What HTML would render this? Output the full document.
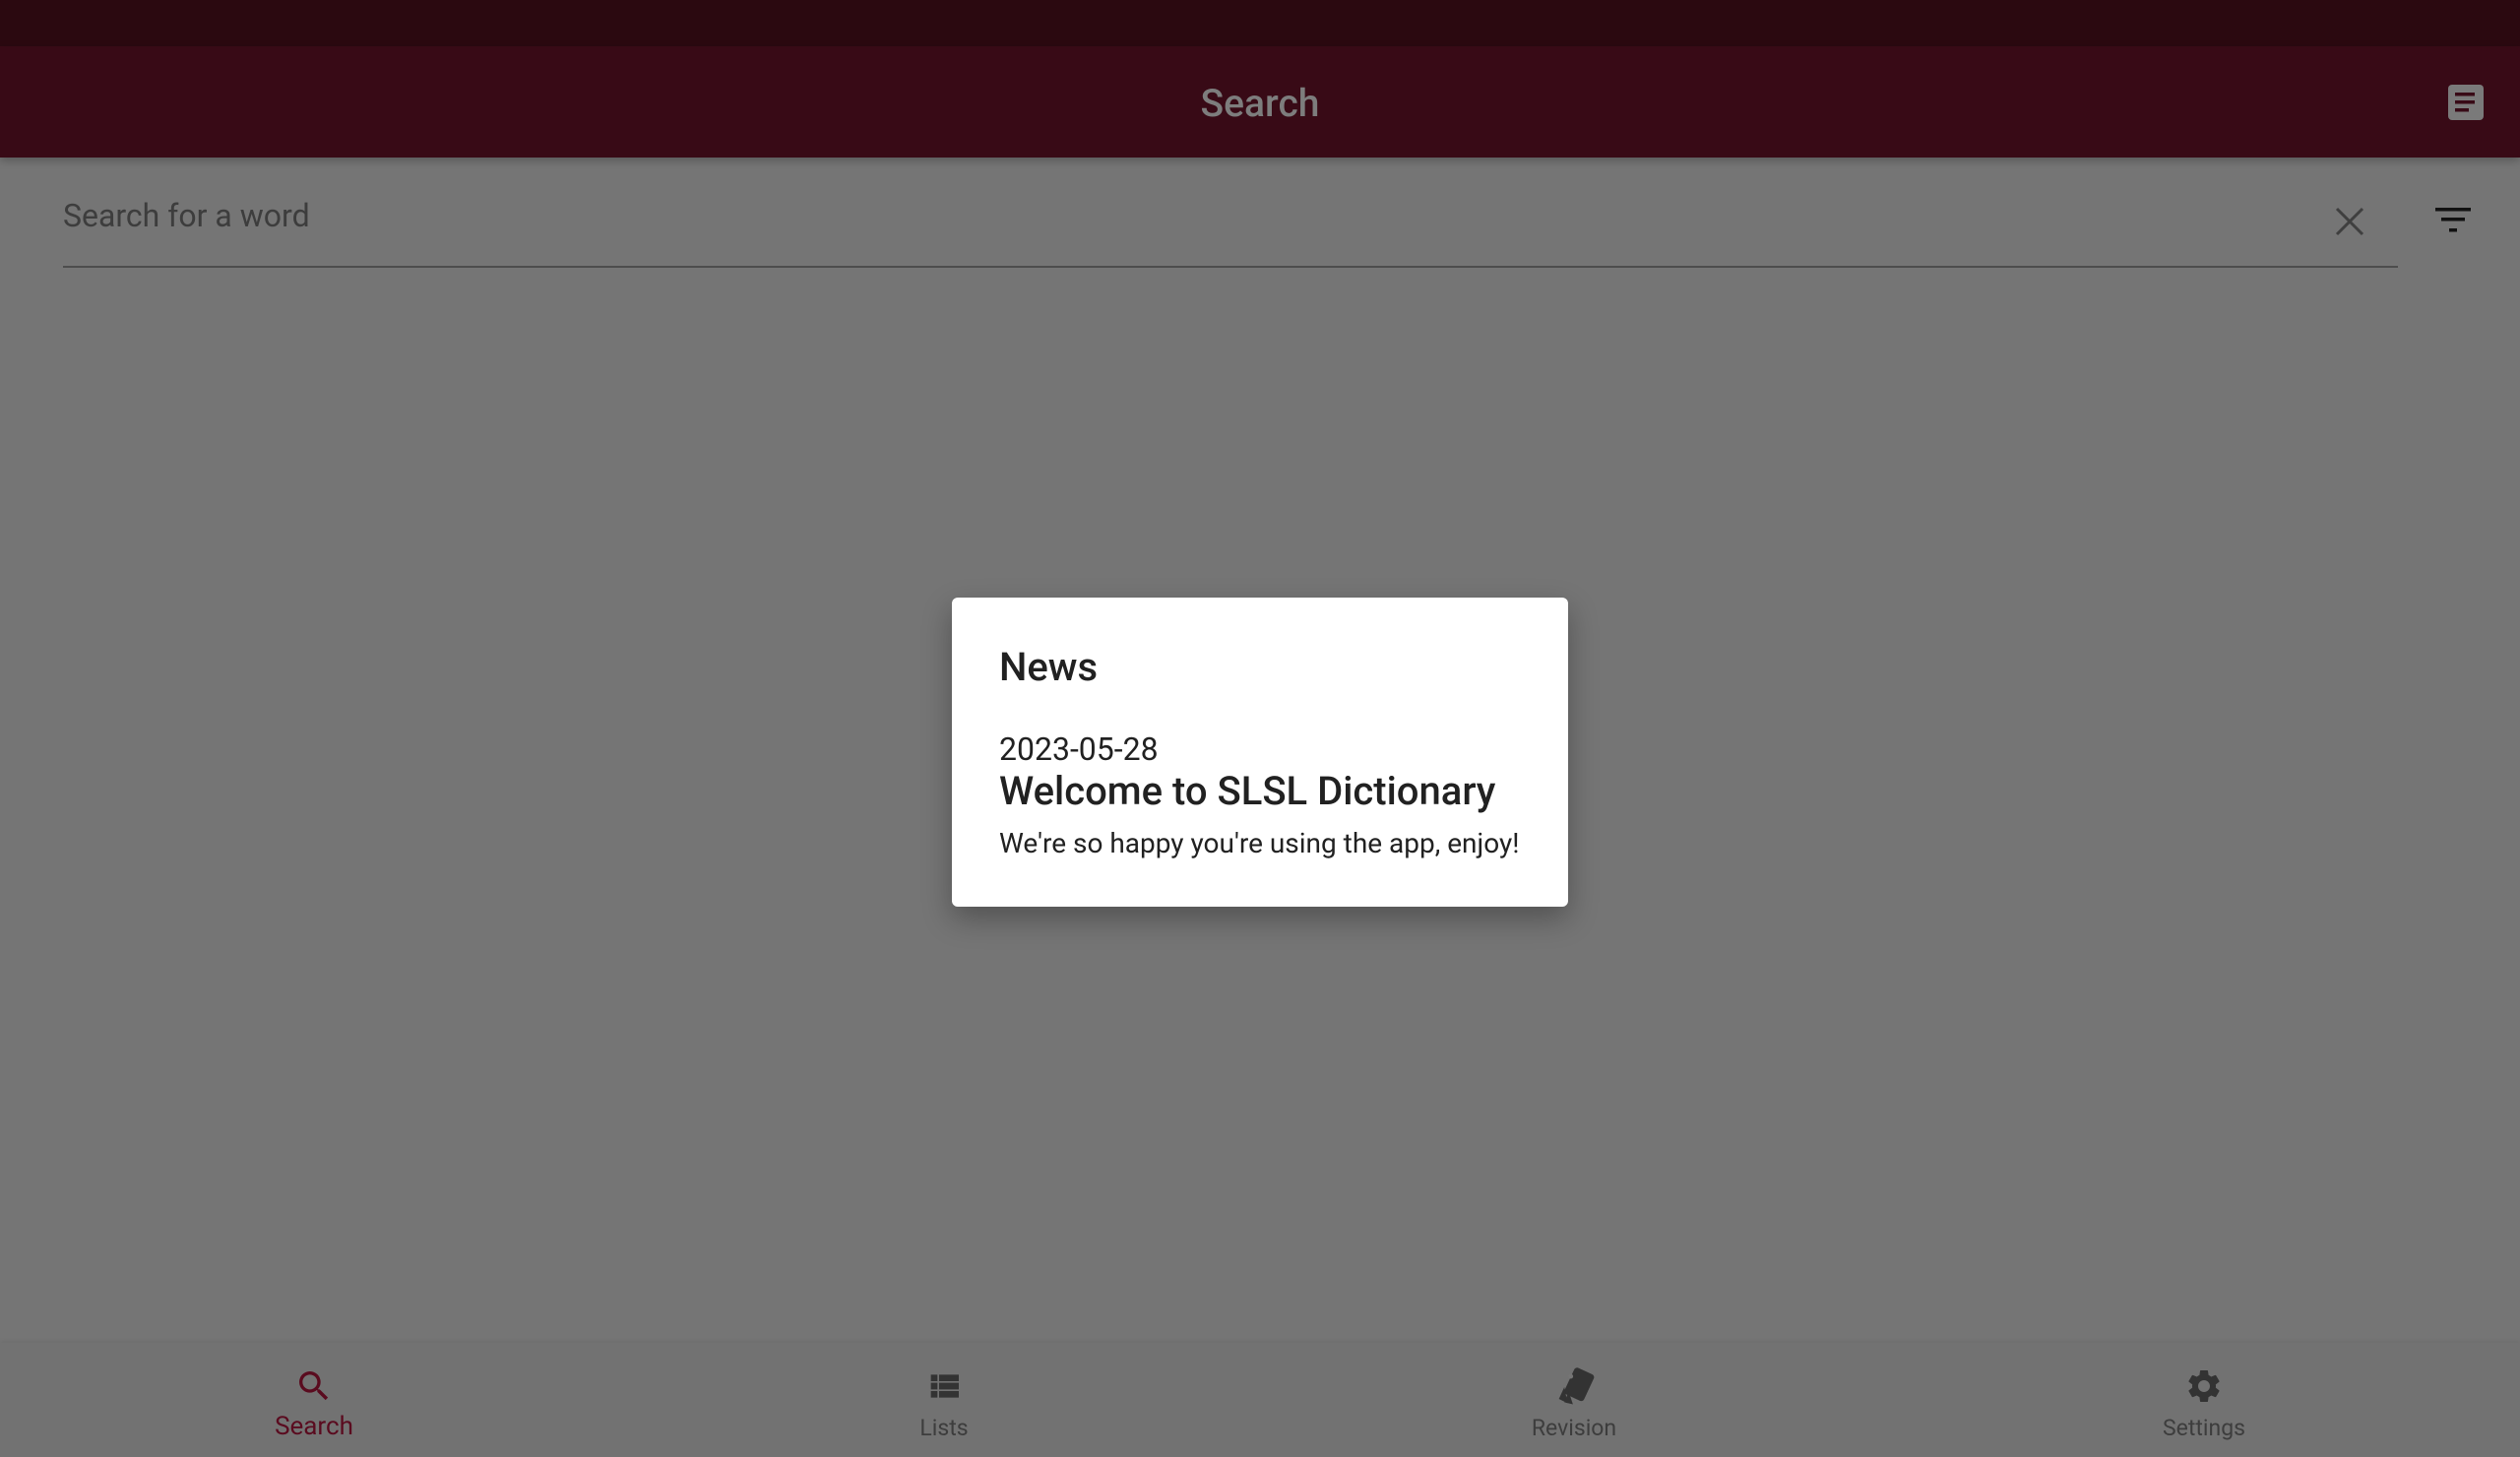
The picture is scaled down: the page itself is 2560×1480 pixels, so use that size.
<!DOCTYPE html>
<html><head><meta charset="utf-8"><style>
html,body{margin:0;padding:0;width:2560px;height:1480px;overflow:hidden;background:#757575;font-family:"Roboto","Liberation Sans",sans-serif;position:relative}
.abs{position:absolute}
</style></head><body>
<div class="abs" style="left:0;top:0;width:2560px;height:47px;background:#2b0910"></div>
<div class="abs" style="left:0;top:47px;width:2560px;height:113px;background:#380a16;box-shadow:0 3px 8px rgba(0,0,0,.25)"></div>
<div class="abs" style="left:0;top:81px;width:2560px;text-align:center;color:#7d7d7d;font-size:39px;line-height:48px;font-weight:500">Search</div>
<svg class="abs" style="left:2484px;top:84px" width="42" height="42" viewBox="0 0 42 42">
<rect x="3" y="2" width="36" height="36" rx="4" fill="#7a7a7a"/>
<rect x="10" y="10" width="20" height="3.5" fill="#380a16"/><rect x="10" y="18" width="20" height="3.5" fill="#380a16"/><rect x="10" y="26" width="14" height="3.5" fill="#380a16"/>
</svg>
<div class="abs" style="left:64px;top:198px;color:#3d3d3d;font-size:32px;line-height:42px">Search for a word</div>
<svg class="abs" style="left:2370px;top:208px" width="34" height="34" viewBox="0 0 34 34"><path d="M4 4L30 30M30 4L4 30" stroke="#3f3f3f" stroke-width="3"/></svg>
<svg class="abs" style="left:2470px;top:206px" width="44" height="34" viewBox="0 0 44 34">
<rect x="4" y="5" width="36" height="3.5" fill="#111"/><rect x="10" y="15" width="24" height="3.5" fill="#111"/><rect x="18" y="26" width="8" height="3.5" fill="#111"/></svg>
<div class="abs" style="left:64px;top:270px;width:2372px;height:2px;background:#4d4d4d"></div>
<div class="abs" style="left:0;top:1364px;width:2560px;height:116px;background:#727272;box-shadow:0 -2px 4px rgba(0,0,0,.06)"></div>
<svg class="abs" style="left:299px;top:1388px" width="40" height="40" viewBox="0 0 24 24"><path fill="#5a0b1f" d="M15.5 14h-.79l-.28-.27A6.47 6.47 0 0 0 16 9.5 6.5 6.5 0 1 0 9.5 16c1.610 0 3.09-.59 4.23-1.57l.27.28v.79l5 4.99L20.49 19l-4.99-5zm-6 0C7.01 14 5 11.99 5 9.5S7.01 5 9.5 5 14 7.01 14 9.5 11.99 14 9.5 14z"/></svg>
<div class="abs" style="left:219px;top:1434px;width:200px;text-align:center;color:#5a0b1f;font-size:26px">Search</div>
<svg class="abs" style="left:939px;top:1388px" width="40" height="40" viewBox="0 0 24 24"><path fill="#333" d="M4 14h4v-4H4v4zm0 5h4v-4H4v4zM4 9h4V5H4v4zm5 5h12v-4H9v4zm0 5h12v-4H9v4zM9 5v4h12V5H9z"/></svg>
<div class="abs" style="left:859px;top:1437px;width:200px;text-align:center;color:#3d3d3d;font-size:23px">Lists</div>
<svg class="abs" style="left:1576px;top:1386px" width="46" height="46" viewBox="0 0 42 42">
<rect x="16" y="5" width="20" height="27" rx="3" transform="rotate(25 26 18)" fill="#333"/>
<path d="M7 32 L12 21 L15 36 Z" fill="#333"/><path d="M12 35 L16 25 L20 37Z" fill="#333"/>
<circle cx="18" cy="11" r="2.2" fill="#757575"/></svg>
<div class="abs" style="left:1499px;top:1437px;width:200px;text-align:center;color:#3d3d3d;font-size:23px">Revision</div>
<svg class="abs" style="left:2219px;top:1388px" width="40" height="40" viewBox="0 0 24 24"><path fill="#333" d="M19.14 12.94c.04-.3.06-.61.06-.94 0-.32-.02-.64-.07-.94l2.030-1.58a.49.49 0 0 0 .12-.61l-1.92-3.32a.488.488 0 0 0-.59-.22l-2.39.96c-.5-.38-1.03-.7-1.62-.94l-.36-2.54a.484.484 0 0 0-.48-.41h-3.84c-.24 0-.43.17-.47.41l-.36 2.54c-.59.24-1.13.57-1.62.94l-2.39-.96c-.22-.08-.47 0-.59.22L2.74 8.87c-.12.21-.08.47.12.61l2.03 1.58c-.05.3-.09.63-.09.94s.02.64.07.94l-2.03 1.58a.49.49 0 0 0-.12.61l1.92 3.32c.12.22.37.29.59.22l2.39-.96c.5.38 1.03.7 1.62.94l.36 2.54c.05.24.24.41.48.41h3.84c.24 0 .44-.17.47-.41l.36-2.54c.59-.24 1.13-.56 1.62-.94l2.39.96c.22.08.47 0 .59-.22l1.92-3.32c.12-.22.07-.47-.12-.61l-2.01-1.58zM12 15.6c-1.98 0-3.6-1.62-3.6-3.6s1.62-3.6 3.6-3.6 3.6 1.62 3.6 3.6-1.62 3.6-3.6 3.6z"/></svg>
<div class="abs" style="left:2139px;top:1437px;width:200px;text-align:center;color:#3d3d3d;font-size:23px">Settings</div>
<div class="abs" style="left:967px;top:607px;width:626px;height:314px;background:#fff;border-radius:6px;box-shadow:0 12px 30px rgba(0,0,0,.3)">
<div class="abs" style="left:48px;top:48px;font-size:40px;line-height:46px;color:#212121;font-weight:500">News</div>
<div class="abs" style="left:48px;top:135px;font-size:32px;line-height:38px;color:#212121">2023-05-28</div>
<div class="abs" style="left:48px;top:173px;font-size:40px;line-height:48px;color:#212121;font-weight:500">Welcome to SLSL Dictionary</div>
<div class="abs" style="left:48px;top:233px;font-size:28px;line-height:34px;color:#212121">We're so happy you're using the app, enjoy!</div>
</div>
</body></html>
